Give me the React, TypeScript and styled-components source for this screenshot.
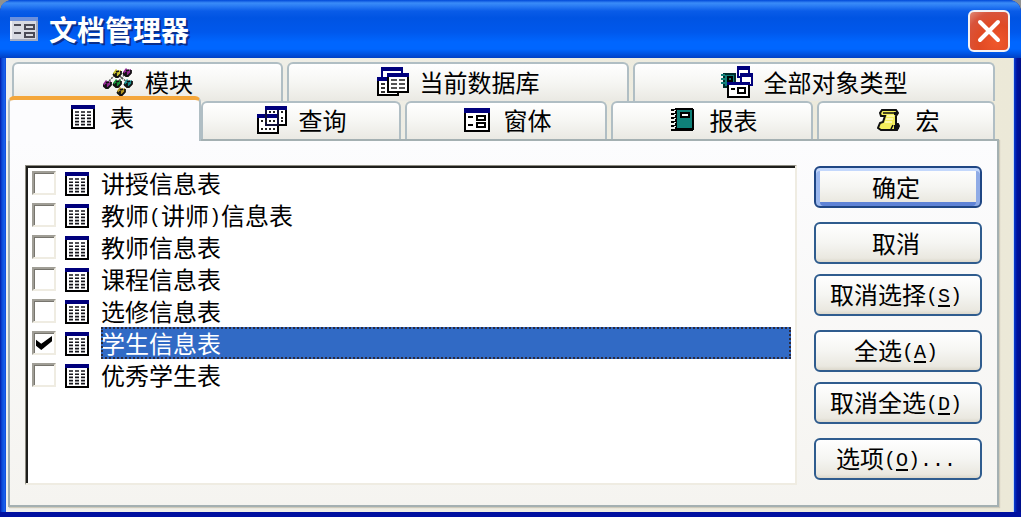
import React, { useState } from "react";
import styled, { createGlobalStyle, css } from "styled-components";

const GlobalStyle = createGlobalStyle`
  *, *::before, *::after { box-sizing: border-box; }
  body {
    margin: 0;
    background: #8f9190;
    color: #000;
    font: 24px/28px "Noto Sans CJK SC", sans-serif;
  }
  button, input { font: inherit; color: inherit; margin: 0; }
`;

const Window = styled.div`
  display: flex;
  flex-direction: column;
  min-height: 100vh;
  padding: 0 7px 6px 6px;
  border-radius: 12px 12px 0 0;
  overflow: hidden;
  background: linear-gradient(90deg, #0019a8 0, #0c4ad8 2px, #1c63ee 5px, #0a3fd0 6px, #0a2fc0 50%, #0a3fd0 calc(100% - 7px), #0013a0 calc(100% - 4px), #001088 100%);
  box-shadow: inset 0 -6px 0 #0010a0;
`;

const TitleBar = styled.header`
  display: flex;
  align-items: center;
  height: 58px;
  margin: 0 -7px 0 -6px;
  padding: 0 11px 0 10px;
  background: linear-gradient(#0048d8 0, #3a8cf8 3px, #2a7cf4 6px, #0a5ce8 11px, #0054e3 18px, #0058ec 32px, #0066ff 42px, #0066ff 49px, #0052e0 54px, #0040c4 58px);
`;

const Title = styled.h1`
  flex: 1;
  margin: 0 0 0 11px;
  font-size: 28px;
  line-height: 36px;
  font-weight: 700;
  color: #fff;
  text-shadow: 2px 2px 0 #0a2f8c;
`;

const CloseButton = styled.button`
  display: flex;
  align-items: center;
  justify-content: center;
  width: 42px;
  height: 42px;
  margin-top: 4px;
  padding: 0;
  border: 2px solid #f4f2f4;
  border-radius: 6px;
  background: radial-gradient(circle at 70% 80%, #f0582c 0, #e04a24 45%, #d8543c 75%, #e08a78 100%);
`;

const Client = styled.main`
  flex: 1;
  display: flex;
  flex-direction: column;
  padding: 4px 14px 5px 2px;
  border-right: 1px solid #c4d8f4;
  background: linear-gradient(90deg, #f0f0ec 0, #ece9d8 100%);
`;

const TabRow = styled.div<{ $columns: string; $back?: boolean }>`
  display: grid;
  grid-template-columns: ${(p) => p.$columns};
  gap: 4px;
  height: ${(p) => (p.$back ? 39 : 38)}px;
  margin: 0 4px 0 ${(p) => (p.$back ? 4 : 0)}px;
`;

const Tab = styled.button<{ $selected?: boolean }>`
  display: flex;
  align-items: center;
  justify-content: center;
  gap: 11px;
  min-width: 0;
  padding: 0 0 2px;
  white-space: nowrap;
  border: 2px solid #b0bec4;
  border-bottom: 0;
  border-radius: 6px 6px 0 0;
  background: linear-gradient(#fff 0, #f6f6f3 50%, #eae9e3 100%);
  ${(p) =>
    p.$selected &&
    css`
      z-index: 1;
      margin: -5px -4px -2px 0;
      padding: 0 8px 8px 0;
      border-top: 4px solid #f4a63a;
      border-bottom: 0;
      background: #fcfcfe;
    `}
`;

const IconBox = styled.span`
  display: flex;
  justify-content: center;
  width: 32px;
`;

const Panel = styled.section`
  flex: 1;
  display: flex;
  gap: 17px;
  padding: 24px 15px 20px;
  border: 2px solid #a4b0b2;
  background: linear-gradient(#fcfcfe, #f5f4f0);
  box-shadow: 1px 1px 1px #cfcbbb;
`;

const List = styled.ul`
  flex: 1;
  min-height: 320px;
  margin: 0;
  padding: 1px 4px 0 6px;
  list-style: none;
  background: #fff;
  border: 1px solid #8c8a80;
  border-right: 2px solid #efece2;
  border-bottom: 2px solid #efece2;
  box-shadow: inset 2px 2px 0 #1e1e1c;
`;

const Row = styled.li`
  display: flex;
  align-items: center;
  height: 32px;
`;

const Check = styled.input`
  appearance: none;
  flex: none;
  display: flex;
  align-items: center;
  justify-content: center;
  width: 24px;
  height: 24px;
  background: #fff;
  border: 2px solid #a09e96;
  border-right-color: #efece2;
  border-bottom-color: #efece2;
  box-shadow: inset 1px 1px 0 #77756e;
  &:checked::before {
    content: "";
    width: 16px;
    height: 14px;
    background: #000;
    clip-path: polygon(0 26%, 33% 56%, 100% 0, 100% 38%, 33% 100%, 0 70%);
  }
`;

const RowLabel = styled.label<{ $selected: boolean }>`
  flex: 1;
  display: flex;
  align-items: center;
  height: 32px;
  margin-left: 12px;
  white-space: nowrap;
  ${(p) =>
    p.$selected &&
    css`
      color: #fff;
      background: #316ac5;
      outline: 2px dotted #2c2a3c;
      outline-offset: -2px;
    `}
`;

const RowIcon = styled.span`
  display: flex;
  margin: 2px 0 0 9px;
`;

const Actions = styled.div`
  flex: none;
  display: flex;
  flex-direction: column;
  gap: 14px;
  width: 168px;
  padding-top: 1px;
`;

const ActionGroup = styled.div`
  display: flex;
  flex-direction: column;
  gap: 10px;
`;

const ActionButton = styled.button<{ $primary?: boolean; $keyed?: boolean }>`
  height: 42px;
  padding: 0 4px ${(p) => (p.$keyed ? 3 : 0)}px 0;
  white-space: nowrap;
  border: 2px solid #2f5c8e;
  border-radius: 6px;
  background: linear-gradient(#fff 0, #f5f5f2 50%, #eae8e0 90%, #dcd8cc 100%);
  ${(p) =>
    p.$primary &&
    css`
      border-color: #1f4684;
      box-shadow: inset 0 3px 0 #c4d8fc, inset 4px 0 0 #9cb8ee, inset -4px 0 0 #8fabe6, inset 0 -4px 0 #5f83d6;
    `}
`;

const Half = styled.span`
  font-family: "Liberation Mono", monospace;
  font-size: 20px;
  line-height: 20px;
  vertical-align: 2px;
`;

const Key = styled.span`
  text-decoration: underline;
  text-decoration-thickness: 2px;
  text-underline-offset: 3px;
`;

const NAVY = "#00007c";

const TableIcon = () => (
  <svg width="24" height="24" viewBox="0 0 24 24" aria-hidden="true">
    <rect x="1" y="1" width="22" height="22" fill="#fff" stroke="#000" strokeWidth="2" />
    <path d="M0 0h24v4H0z" fill={NAVY} />
    <path d="M4 7h16M4 10.2h16M4 13.4h16M4 16.6h16M4 19.6h16" stroke="#16161c" strokeWidth="1.6" strokeDasharray="4 2" />
  </svg>
);

const QueryIcon = () => (
  <svg width="30" height="28" viewBox="0 0 30 28" shapeRendering="crispEdges" aria-hidden="true">
    <rect x="9" y="1" width="20" height="18" fill="#fff" stroke="#000" strokeWidth="2" />
    <path d="M8 0h22v4H8z" fill={NAVY} />
    <path d="M12 6h16M12 9h2M24 12h4M24 15h4" stroke="#222" strokeWidth="2" strokeDasharray="2 2" />
    <rect x="1" y="9" width="20" height="18" fill="#fff" stroke="#000" strokeWidth="2" />
    <path d="M0 8h22v4H0z" fill={NAVY} />
    <path d="M8 4h2v14H8zM8 18h14v2H8zM20 4h2v16h-2z" fill="#11113a" />
    <path d="M4 15h16M4 23h16" stroke="#222" strokeWidth="2" strokeDasharray="2 2" />
  </svg>
);

const FormIcon = () => (
  <svg width="26" height="24" viewBox="0 0 26 24" shapeRendering="crispEdges" aria-hidden="true">
    <rect x="1" y="1" width="24" height="22" fill="#fff" stroke="#000" strokeWidth="2" />
    <path d="M0 0h26v5H0z" fill={NAVY} />
    <g fill="none" stroke="#000" strokeWidth="2">
      <path d="M4 9h5M4 17h5" />
      <rect x="13" y="8" width="8" height="4" />
      <rect x="13" y="15" width="8" height="4" />
    </g>
  </svg>
);

const WindowIcon = () => (
  <svg width="28" height="24" viewBox="0 0 28 24" shapeRendering="crispEdges" aria-hidden="true">
    <path d="M0 0h28v24H0z" fill="#d8dae2" />
    <path d="M0 0h28v4H0z" fill="#6c90dc" />
    <path d="M0 4h2v20H0z" fill="#f0f0f4" />
    <path d="M26 4h2v20h-2zM0 22h28v2H0z" fill="#a4acc0" />
    <g fill="none" stroke="#4a4a56" strokeWidth="2">
      <path d="M4 8h7M4 16h7" />
      <rect x="15" y="8" width="9" height="4" />
      <rect x="15" y="16" width="9" height="4" />
    </g>
  </svg>
);

const DatabaseIcon = () => (
  <svg width="32" height="30" viewBox="0 0 32 30" shapeRendering="crispEdges" aria-hidden="true">
    <rect x="5" y="1" width="20" height="16" fill="#fff" stroke={NAVY} strokeWidth="2" />
    <path d="M4 0h22v4H4z" fill={NAVY} />
    <rect x="1" y="11" width="20" height="17" fill="#fff" stroke="#000" strokeWidth="2" />
    <path d="M0 10h12v4H0z" fill={NAVY} />
    <path d="M4 17h4M4 21h4M4 25h4" stroke="#333" strokeWidth="2" />
    <rect x="11" y="7" width="20" height="18" fill="#fff" stroke="#000" strokeWidth="2" />
    <path d="M10 6h22v4H10z" fill={NAVY} />
    <path d="M14 13h14M14 17h14M14 21h14" stroke="#555" strokeWidth="2" strokeDasharray="6 2" />
  </svg>
);

const AllObjectsIcon = () => (
  <svg width="32" height="32" viewBox="0 0 32 32" shapeRendering="crispEdges" aria-hidden="true">
    <rect x="17" y="1" width="11" height="10" fill="#fff" stroke={NAVY} strokeWidth="2" />
    <path d="M16 0h13v4H16z" fill={NAVY} />
    <rect x="3" y="8" width="11" height="13" fill="#128078" stroke="#002c2c" strokeWidth="2" />
    <path d="M0 9h4M0 13h4M0 17h4" stroke="#128078" strokeWidth="2" />
    <path d="M7 11h4v4H7z" fill="none" stroke="#000" strokeWidth="2" />
    <rect x="20" y="8" width="11" height="11" fill="#fff" stroke={NAVY} strokeWidth="2" />
    <path d="M19 7h13v4H19z" fill={NAVY} />
    <rect x="7" y="17" width="21" height="14" fill="#fff" stroke="#000" strokeWidth="2" />
    <path d="M6 16h23v3H6z" fill={NAVY} />
    <path d="M10 23h4" stroke="#000" strokeWidth="2" />
    <rect x="17" y="22" width="7" height="5" fill="none" stroke="#000" strokeWidth="2" />
  </svg>
);

const ReportIcon = () => (
  <svg width="24" height="24" viewBox="0 0 24 24" shapeRendering="crispEdges" aria-hidden="true">
    <path d="M4 0h17l2 2v19l-2 2H4z" fill="#000" />
    <path d="M6 2h15v18H6z" fill="#0f8078" />
    <path d="M3 1v22" stroke="#000" strokeWidth="6" strokeDasharray="2 2" />
    <path d="M4 2v20" stroke="#d8e4e0" strokeWidth="2" strokeDasharray="1 3" />
    <rect x="10" y="5" width="8" height="4" fill="#fff" stroke="#000" strokeWidth="2" />
  </svg>
);

const MacroIcon = () => (
  <svg width="24" height="24" viewBox="0 0 24 24" aria-hidden="true">
    <path d="M5 2h14l2 3-2 3v8h2l1 2-2 4H4l-3-2 2-5 3-1 2-6H4L3 5z" fill="#f4ee5c" stroke="#111" strokeWidth="2" />
    <path d="M6 5h12M16 17l-2 4" fill="none" stroke="#111" strokeWidth="1.6" />
    <path d="M10 8h7M9 11h7M8 14h7" stroke="#fffbc4" strokeWidth="1.4" />
    <path d="M17 17h5v4h-5zM17 4h4v3h-4z" fill="#111" />
  </svg>
);

const ModuleIcon = () => (
  <svg width="30" height="28" viewBox="0 0 30 28" aria-hidden="true">
    <path d="M4 15L14 5M14 15L24 4M14 6l11 9M14 15l5 9" stroke="#555" strokeWidth="1.5" strokeDasharray="2 1" fill="none" />
    {[
      [14, 5, "#c8c030"],
      [24, 4, "#902890"],
      [4, 16, "#902890"],
      [14, 15, "#189038"],
      [25, 15, "#188c8c"],
      [18, 23, "#b09420"],
    ].map(([x, y, fill]) => (
      <g key={`${x}-${y}`} transform={`translate(${x} ${y})`}>
        <path d="M-4 0L-1-4 1-2 4-3 4 2 1 4-1 4-4 3z" fill={fill as string} />
        <path d="M-4 1l3 3 2 0 3-3v-3M-1-1l3-1M-1 0v3" fill="none" stroke="#111" strokeWidth="1.8" />
      </g>
    ))}
  </svg>
);

type TabInfo = { label: string; icon: React.ReactNode; selected?: boolean };

const backTabs: TabInfo[] = [
  { label: "模块", icon: <ModuleIcon /> },
  { label: "当前数据库", icon: <DatabaseIcon /> },
  { label: "全部对象类型", icon: <AllObjectsIcon /> },
];

const frontTabs: TabInfo[] = [
  { label: "表", icon: <TableIcon />, selected: true },
  { label: "查询", icon: <QueryIcon /> },
  { label: "窗体", icon: <FormIcon /> },
  { label: "报表", icon: <ReportIcon /> },
  { label: "宏", icon: <MacroIcon /> },
];

const renderTab = ({ label, icon, selected }: TabInfo) => (
  <Tab key={label} type="button" role="tab" aria-selected={!!selected} $selected={selected}>
    <IconBox>{icon}</IconBox>
    {label}
  </Tab>
);

const rows: { id: string; text: React.ReactNode }[] = [
  { id: "lecture", text: "讲授信息表" },
  { id: "lecturer", text: <>教师<Half>(</Half>讲师<Half>)</Half>信息表</> },
  { id: "teacher", text: "教师信息表" },
  { id: "course", text: "课程信息表" },
  { id: "elective", text: "选修信息表" },
  { id: "student", text: "学生信息表" },
  { id: "honours", text: "优秀学生表" },
];

const Action = ({ text, hotkey, more, primary }: { text: string; hotkey?: string; more?: boolean; primary?: boolean }) => (
  <ActionButton type="button" $primary={primary} $keyed={!!hotkey}>
    {text}
    {hotkey && (
      <Half>
        (<Key>{hotkey}</Key>){more && "..."}
      </Half>
    )}
  </ActionButton>
);

export default function App() {
  const [checked, setChecked] = useState<Record<string, boolean>>({ student: true });
  return (
    <>
      <GlobalStyle />
      <Window>
        <TitleBar>
          <WindowIcon />
          <Title>文档管理器</Title>
          <CloseButton type="button" aria-label="关闭">
            <svg width="24" height="24" viewBox="0 0 24 24" aria-hidden="true">
              <path d="M3 3l18 18M21 3L3 21" stroke="#fff" strokeWidth="4" strokeLinecap="round" />
            </svg>
          </CloseButton>
        </TitleBar>
        <Client>
          <div role="tablist">
            <TabRow $back $columns="271fr 342fr 362fr">{backTabs.map(renderTab)}</TabRow>
            <TabRow $columns="189fr 200fr 202fr 202fr 178fr">{frontTabs.map(renderTab)}</TabRow>
          </div>
          <Panel>
            <List>
              {rows.map(({ id, text }) => (
                <Row key={id}>
                  <Check
                    type="checkbox"
                    id={id}
                    checked={!!checked[id]}
                    onChange={(e) => setChecked({ ...checked, [id]: e.target.checked })}
                  />
                  <RowIcon><TableIcon /></RowIcon>
                  <RowLabel htmlFor={id} $selected={id === "student"}><span>{text}</span></RowLabel>
                </Row>
              ))}
            </List>
            <Actions>
              <ActionGroup>
                <Action text="确定" primary />
              </ActionGroup>
              <ActionGroup>
                <Action text="取消" />
                <Action text="取消选择" hotkey="S" />
              </ActionGroup>
              <ActionGroup>
                <Action text="全选" hotkey="A" />
                <Action text="取消全选" hotkey="D" />
              </ActionGroup>
              <ActionGroup>
                <Action text="选项" hotkey="O" more />
              </ActionGroup>
            </Actions>
          </Panel>
        </Client>
      </Window>
    </>
  );
}
